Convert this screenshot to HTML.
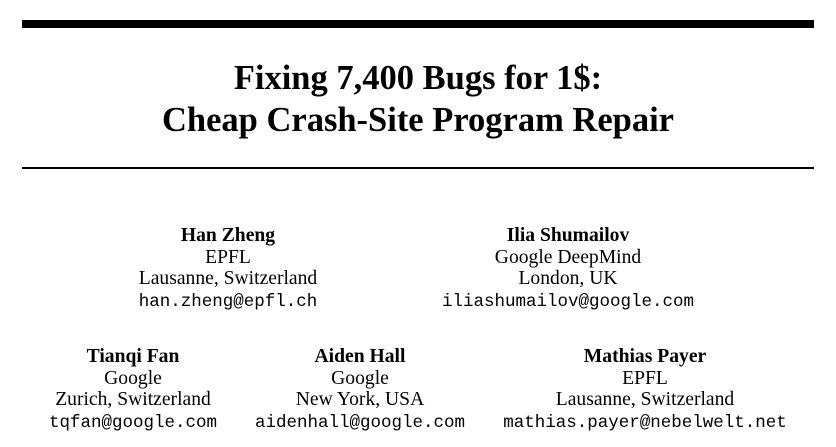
<!DOCTYPE html>
<html><head><meta charset="utf-8"><style>
body{margin:0;width:836px;height:447px;background:#fff;position:relative;overflow:hidden;font-family:"Liberation Serif",serif;color:#000}
.r{position:absolute;left:22px;width:792px;background:#000}
.t{position:absolute;left:0;width:836px;text-align:center;font-weight:bold;font-size:34.5px;line-height:42px}
.a{position:absolute;width:400px;text-align:center;font-size:19.6px;line-height:21.5px}
.a b{font-weight:bold}
.m{font-family:"Liberation Mono",monospace;font-size:17.5px}
</style></head><body>
<div class="r" style="top:20px;height:8px"></div>
<div class="t" style="top:57px">Fixing 7,400 Bugs for 1$:<br>Cheap Crash-Site Program Repair</div>
<div class="r" style="top:167px;height:2px"></div>
<div class="a" style="left:28px;top:225px"><b>Han Zheng</b><br>EPFL<br>Lausanne, Switzerland<br><span class="m">han.zheng@epfl.ch</span></div>
<div class="a" style="left:368px;top:225px"><b>Ilia Shumailov</b><br>Google DeepMind<br>London, UK<br><span class="m">iliashumailov@google.com</span></div>
<div class="a" style="left:-67px;top:346px"><b>Tianqi Fan</b><br>Google<br>Zurich, Switzerland<br><span class="m">tqfan@google.com</span></div>
<div class="a" style="left:160px;top:346px"><b>Aiden Hall</b><br>Google<br>New York, USA<br><span class="m">aidenhall@google.com</span></div>
<div class="a" style="left:445px;top:346px"><b>Mathias Payer</b><br>EPFL<br>Lausanne, Switzerland<br><span class="m">mathias.payer@nebelwelt.net</span></div>
</body></html>
